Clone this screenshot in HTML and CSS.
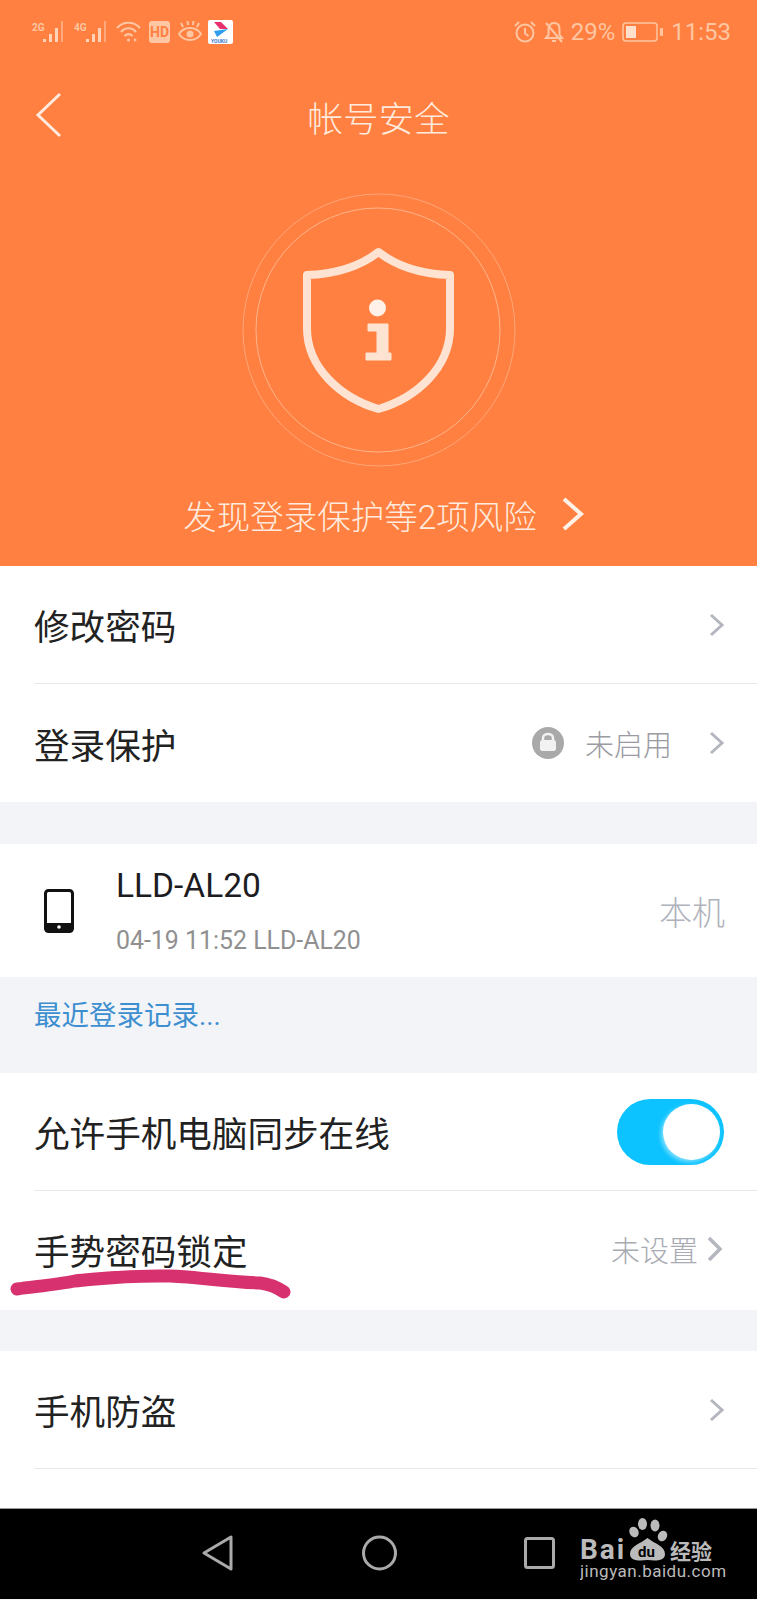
FILE: index.html
```html
<!DOCTYPE html>
<html lang="zh-CN">
<head>
    <meta charset="UTF-8">
    <meta name="viewport" content="width=device-width, initial-scale=1.0">
    <title>帐号安全</title>
    <link rel="stylesheet" href="styles.css">
</head>
<body>
<div class="hero">
    <div class="status">
        <div class="status-left">
            <svg class="signal" width="34" height="24" viewBox="0 0 34 24">
                <text x="0" y="11" class="net">2G</text>
                <rect x="11" y="19" width="3" height="3" class="on"/>
                <rect x="17" y="14" width="3" height="8" class="on"/>
                <rect x="23" y="8" width="3" height="14" class="on"/>
                <rect x="29" y="1" width="2" height="21" class="off"/>
            </svg>
            <svg class="signal" width="34" height="24" viewBox="0 0 34 24">
                <text x="0" y="11" class="net">4G</text>
                <rect x="12" y="19" width="3" height="3" class="on"/>
                <rect x="18" y="14" width="3" height="8" class="on"/>
                <rect x="24" y="8" width="3" height="14" class="on"/>
                <rect x="30" y="1" width="2" height="21" class="off"/>
            </svg>
            <svg width="25" height="24" viewBox="0 0 25 24" fill="none" stroke="#ffc6a3" stroke-width="2.2">
                <path d="M1 8C7 1 18 1 24 8"/>
                <path d="M5 12C9 7 16 7 20 12"/>
                <path d="M8.500 16C11 13.500 14 13.500 16.500 16"/>
                <circle cx="12.500" cy="20" r="1.500" fill="#ffc6a3" stroke="none"/>
                <path d="M18 18v4l3-2z" fill="#ffc6a3" stroke="none"/>
            </svg>
            <span class="hd">HD</span>
            <svg width="24" height="22" viewBox="0 0 24 22" fill="none" stroke="#ffc6a3" stroke-width="2">
                <path d="M1 13C6 5 18 5 23 13C18 21 6 21 1 13Z"/>
                <circle cx="12" cy="13" r="3.500" fill="#ffc6a3" stroke="none"/>
                <path d="M5 6L3 2M10 4L9.500 0M15 4L15.500 0M19 6L21 2"/>
            </svg>
            <svg class="youku" width="25" height="24" viewBox="0 0 25 24">
                <rect width="25" height="24" rx="2" fill="#fff"/>
                <path d="M6 2L13 2L20 9L12 9Z" fill="#e8326f"/>
                <path d="M20 9L9 17L6 11L13 10Z" fill="#2f9df0"/>
                <text x="3" y="22.500" class="youku-text">YOUKU</text>
            </svg>
        </div>
        <div class="status-right">
            <svg width="22" height="24" viewBox="0 0 22 24" fill="none" stroke="#ffc6a3" stroke-width="2">
                <circle cx="11" cy="13" r="8.500"/>
                <path d="M11 8v5.500l3.500 2.500"/>
                <path d="M1 6L5 2M21 6L17 2"/>
            </svg>
            <svg class="bell" width="20" height="24" viewBox="0 0 20 24" fill="none" stroke="#ffc6a3" stroke-width="2">
                <path d="M2 18h16l-2.500-3V9C15.500 5 13 3 10 3S5 5 4.500 9v6z"/>
                <path d="M8 21h4"/>
                <path d="M2 3L18 22"/>
            </svg>
            <span class="status-text">29%</span>
            <svg width="42" height="20" viewBox="0 0 42 20" fill="none">
                <rect x="1" y="1" width="34" height="18" rx="3" stroke="#ffc6a3" stroke-width="1.500"/>
                <rect x="4" y="4" width="10" height="12" fill="#ffe0cc"/>
                <rect x="38" y="6" width="3" height="8" rx="1" fill="#ffc6a3"/>
            </svg>
            <span class="status-text">11:53</span>
        </div>
    </div>
    <div class="nav">
        <svg class="back" width="27" height="46" viewBox="0 0 27 46" fill="none" stroke="#ffeadd" stroke-width="3">
            <path d="M25 2L3 23L25 44"/>
        </svg>
        <span class="nav-title">帐号安全</span>
    </div>
    <svg class="shield" width="280" height="280" viewBox="0 0 280 280" fill="none">
        <circle cx="140" cy="140" r="136" stroke="#ffa679" stroke-width="1"/>
        <circle cx="139" cy="140" r="122" stroke="#ffb48d" stroke-width="1"/>
        <path d="M139.500 62C124 74 100 84 68 85V138C68 178 102 208 139.500 219C177 208 211 178 211 138V85C179 84 155 74 139.500 62Z" stroke="#ffe3d2" stroke-width="8" stroke-linejoin="round"/>
        <circle cx="138.500" cy="118" r="8.500" fill="#fff1e8"/>
        <path d="M129 134H149V163H152V170H127V163H138V141H129Z" fill="#ffe3d2" stroke="#ffe3d2" stroke-width="1" stroke-linejoin="round"/>
    </svg>
    <div class="risk">
        <span>发现登录保护等2项风险</span>
        <svg width="24" height="34" viewBox="0 0 24 34" fill="none" stroke="#fff1e8" stroke-width="4">
            <path d="M3 2L20 17L3 32"/>
        </svg>
    </div>
</div>

<div class="group">
    <div class="row">
        <span class="row-title">修改密码</span>
        <svg class="chevron" width="16" height="24" viewBox="0 0 16 24" fill="none" stroke="#b4b6bf" stroke-width="3">
            <path d="M2 2L13 12L2 22"/>
        </svg>
    </div>
    <div class="row no-line">
        <span class="row-title">登录保护</span>
        <svg class="lock" width="32" height="32" viewBox="0 0 32 32">
            <circle cx="16" cy="16" r="16" fill="#a9a9a9"/>
            <path d="M11 14V11C11 5.500 21 5.500 21 11V14" fill="none" stroke="#f2f2f2" stroke-width="2.500"/>
            <rect x="8" y="13" width="16" height="11" rx="2.500" fill="#f2f2f2"/>
        </svg>
        <span class="row-value">未启用</span>
        <svg class="chevron" width="16" height="24" viewBox="0 0 16 24" fill="none" stroke="#b4b6bf" stroke-width="3">
            <path d="M2 2L13 12L2 22"/>
        </svg>
    </div>
</div>

<div class="group gap-top device">
    <svg class="phone" width="30" height="44" viewBox="0 0 30 44">
        <rect x="1.500" y="1.500" width="27" height="41" rx="3" fill="none" stroke="#111" stroke-width="3"/>
        <rect x="1.500" y="34" width="27" height="8.500" fill="#111"/>
        <circle cx="15" cy="38" r="1.800" fill="#fff"/>
    </svg>
    <div class="device-info">
        <span class="device-name">LLD-AL20</span>
        <span class="device-time">04-19 11:52 LLD-AL20</span>
    </div>
    <span class="device-tag">本机</span>
</div>
<div class="recent">最近登录记录...</div>

<div class="group">
    <div class="row">
        <span class="row-title">允许手机电脑同步在线</span>
        <div class="toggle"><div class="knob"></div></div>
    </div>
    <div class="row row-tall no-line">
        <span class="row-title">手势密码锁定</span>
        <span class="row-value short">未设置</span>
        <svg class="chevron shift" width="16" height="26" viewBox="0 0 16 26" fill="none" stroke="#b4b6bf" stroke-width="3.500">
            <path d="M2 2L13 13L2 24"/>
        </svg>
        <svg class="scribble" width="300" height="34" viewBox="0 0 300 34" fill="none">
            <path d="M17 20C40 17 60 15 75 12C100 10 120 6 170 7C200 8 225 13 260 14C270 15 278 19 284 23" stroke="#d8316f" stroke-width="13" stroke-linecap="round"/>
        </svg>
    </div>
</div>

<div class="group gap-top-small">
    <div class="row">
        <span class="row-title">手机防盗</span>
        <svg class="chevron" width="16" height="24" viewBox="0 0 16 24" fill="none" stroke="#b4b6bf" stroke-width="3">
            <path d="M2 2L13 12L2 22"/>
        </svg>
    </div>
    <div class="row-cut"></div>
</div>

<div class="navbar">
    <svg class="nav-back" width="31" height="36" viewBox="0 0 31 36" fill="none" stroke="#aaa" stroke-width="3" stroke-linejoin="round">
        <path d="M2 18L29 2V34Z"/>
    </svg>
    <svg class="nav-home" width="35" height="36" viewBox="0 0 35 36" fill="none" stroke="#aaa" stroke-width="3">
        <circle cx="17.500" cy="18" r="16"/>
    </svg>
    <svg class="nav-recent" width="31" height="32" viewBox="0 0 31 32" fill="none" stroke="#aaa" stroke-width="3">
        <rect x="1.500" y="1.500" width="28" height="29" rx="2"/>
    </svg>
    <svg class="watermark" width="160" height="72" viewBox="0 0 160 72">
        <text x="0" y="42" class="wm-bai">Bai</text>
        <ellipse cx="54" cy="15" rx="4.500" ry="5.500" fill="#bbb" transform="rotate(-30 54 15)"/>
        <ellipse cx="62.500" cy="7" rx="4.500" ry="6" fill="#bbb"/>
        <ellipse cx="75" cy="8.500" rx="4.500" ry="6" fill="#bbb"/>
        <ellipse cx="82.500" cy="19" rx="4.500" ry="5.500" fill="#bbb" transform="rotate(30 82.500 19)"/>
        <path d="M50 37C50 29 60 27 67.500 21C75 27 85 29 85 37C85 44 76 44 67.500 43C59 44 50 44 50 37Z" fill="#bbb"/>
        <text x="58" y="40" class="wm-du">du</text>
        <text x="90" y="42" class="wm-cn">经验</text>
        <text x="0" y="60" class="wm-url">jingyan.baidu.com</text>
    </svg>
</div>
</body>
</html>
```

FILE: styles.css
```css
* {
    box-sizing: border-box;
}

body {
    margin: 0;
    background-color: #f3f4f8;
    font-family: Roboto, "Noto Sans CJK SC", sans-serif;
    color: #222;
}

svg {
    display: block;
    flex-shrink: 0;
}

.hero {
    height: 566px;
    background-color: #ff8040;
    display: flex;
    flex-direction: column;
    align-items: center;
}

.status {
    width: 100%;
    height: 66px;
    padding: 0 26px 2px 32px;
    display: flex;
    justify-content: space-between;
    align-items: center;
}

.status-left,
.status-right {
    display: flex;
    align-items: center;
    gap: 8px;
}

.status-right {
    gap: 7px;
}

.net {
    font-size: 10px;
    font-weight: 700;
    fill: #ffc6a3;
}

.on {
    fill: #ffd3b8;
}

.off {
    fill: #ffa97c;
}

.hd {
    width: 21px;
    height: 22px;
    border-radius: 3px;
    background-color: #ffc6a3;
    color: #ff8040;
    font-size: 14px;
    font-weight: 700;
    line-height: 22px;
    text-align: center;
}

.youku {
    margin-left: -2px;
}

.youku-text {
    font-size: 5px;
    font-weight: 700;
    fill: #3a7bd0;
}

.bell {
    margin-left: 1px;
}

.status-text {
    color: #ffc6a3;
    font-size: 24px;
    line-height: 24px;
}

.nav {
    position: relative;
    width: 100%;
    height: 100px;
    display: flex;
    justify-content: center;
    align-items: center;
}

.back {
    position: absolute;
    left: 35px;
    top: 26px;
}

.nav-title {
    color: #ffeadd;
    font-size: 35.500px;
    font-weight: 300;
}

.shield {
    margin-top: 24px;
}

.risk {
    height: 92px;
    margin-left: 11px;
    padding-bottom: 4px;
    display: flex;
    align-items: center;
    gap: 24px;
    color: #ffeadd;
    font-size: 33.500px;
    font-weight: 300;
}

.group {
    background-color: #fff;
}

.gap-top {
    margin-top: 42px;
}

.gap-top-small {
    margin-top: 41px;
}

.row {
    position: relative;
    height: 118px;
    margin-left: 34px;
    padding-right: 32px;
    display: flex;
    align-items: center;
    border-bottom: 1px solid #e8e8ea;
}

.row-tall {
    height: 119px;
    padding-bottom: 3px;
}

.no-line {
    border-bottom: none;
}

.row-title {
    flex: 1;
    font-size: 35.600px;
    color: #222;
}

.row-value {
    margin-left: 21px;
    margin-right: 37px;
    font-size: 29px;
    font-weight: 300;
    color: #9a9ba3;
}

.row-value.short {
    margin-right: 9px;
    color: #a9abb3;
}

.chevron.shift {
    margin-right: 2px;
}

.row-cut {
    height: 39px;
}

.device {
    height: 133px;
    padding: 0 32px 0 44px;
    display: flex;
    align-items: center;
}

.device-info {
    flex: 1;
    margin-left: 42px;
    padding-top: 3px;
    display: flex;
    flex-direction: column;
    gap: 22px;
}

.device-name {
    font-size: 33.500px;
    line-height: 36px;
    color: #1c1c22;
}

.device-time {
    font-size: 24.900px;
    line-height: 30px;
    color: #909090;
}

.device-tag {
    font-size: 33px;
    font-weight: 300;
    color: #b0b2bb;
}

.recent {
    height: 96px;
    padding-left: 34px;
    padding-bottom: 24px;
    display: flex;
    align-items: center;
    font-size: 27.500px;
    color: #3d8fd0;
}

.toggle {
    width: 107px;
    height: 66px;
    margin-right: 1px;
    padding: 5px 4px;
    border-radius: 33px;
    background-color: #0cc3ff;
    display: flex;
    justify-content: flex-end;
}

.knob {
    width: 57px;
    height: 56px;
    border-radius: 50%;
    background-color: #fff;
    box-shadow: -2px 2px 4px rgba(255, 255, 255, 0.500);
}

.scribble {
    position: absolute;
    left: -34px;
    top: 78px;
}

.navbar {
    position: relative;
    height: 91px;
    border-top: 1px solid #999;
    background-color: #000;
}

.nav-back,
.nav-home,
.nav-recent,
.watermark {
    position: absolute;
}

.nav-back {
    left: 202px;
    top: 26px;
}

.nav-home {
    left: 362px;
    top: 26px;
}

.nav-recent {
    left: 524px;
    top: 28px;
}

.watermark {
    left: 580px;
    top: 8px;
}

.wm-bai {
    font-size: 28px;
    font-weight: 700;
    letter-spacing: 2px;
    fill: #bbb;
}

.wm-du {
    font-size: 15px;
    font-weight: 700;
    fill: #000;
}

.wm-cn {
    font-size: 21px;
    font-weight: 700;
    fill: #bbb;
}

.wm-url {
    font-size: 17px;
    letter-spacing: 0.500px;
    fill: #bbb;
}
```
